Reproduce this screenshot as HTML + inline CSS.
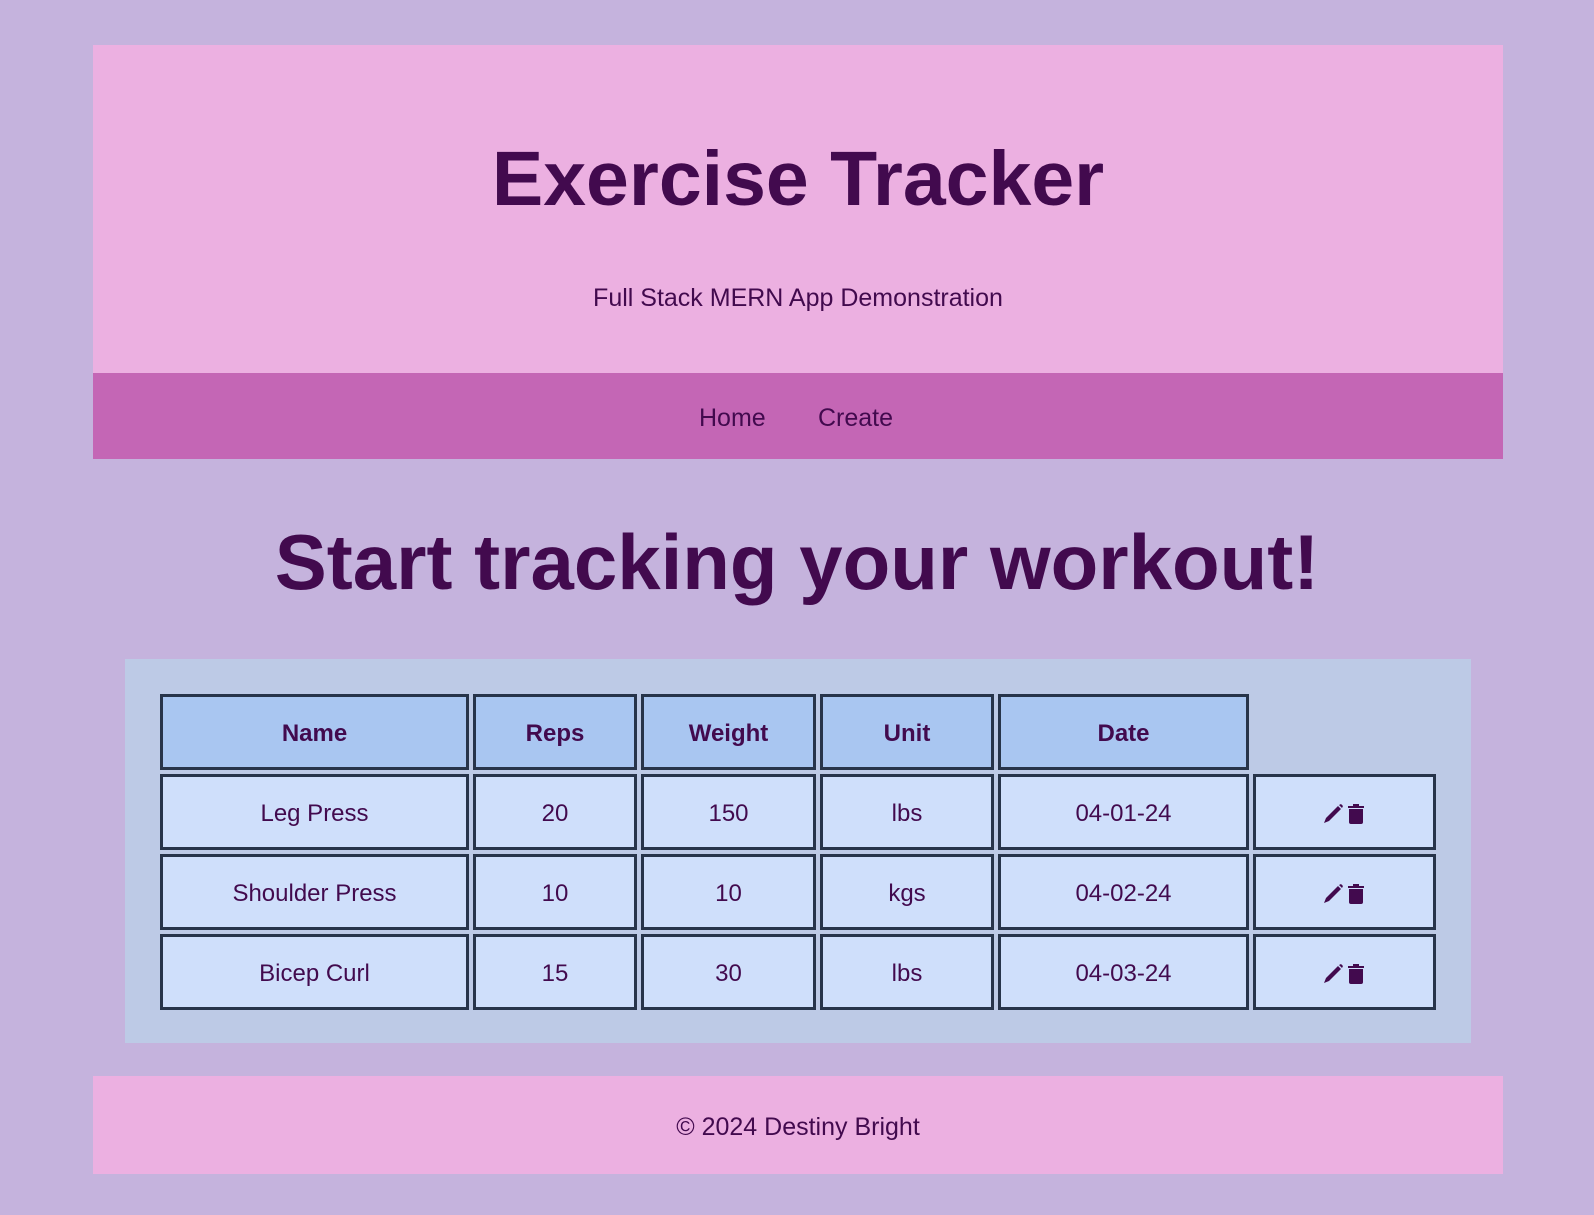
<!DOCTYPE html>
<html><head><meta charset="utf-8"><style>
*{box-sizing:border-box;margin:0;padding:0}
body{width:1594px;height:1215px;background:#c5b3dd;font-family:"Liberation Sans",sans-serif;color:#420a4e;position:relative;overflow:hidden}
header{position:absolute;left:93px;top:45px;width:1410px;height:328px;background:#ecb0e1;text-align:center}
header h1{position:absolute;left:0;right:0;top:134px;font-size:77px;line-height:0;font-weight:bold}
header p{position:absolute;left:0;right:0;top:253px;font-size:25px;line-height:0}
nav{position:absolute;left:93px;top:373px;width:1410px;height:86px;background:#c466b5;font-size:25px}
nav a{position:absolute;top:45px;line-height:0;color:#420a4e;text-decoration:none}
h2{position:absolute;left:0;right:0;top:562px;line-height:0;text-align:center;font-size:78px;font-weight:bold}
.box{position:absolute;left:125px;top:659px;width:1346px;height:384px;background:#bdcae6}
table{position:absolute;left:31px;top:31px;border-spacing:4px;border-collapse:separate}
td,th{border:3px solid #27344a;height:76px;text-align:center;font-size:24px;padding:4px 0 0}
th{background:#a9c6f1;font-weight:bold}
td{background:#cfdffb}
th.e{background:none;border:none}
footer{position:absolute;left:93px;top:1076px;width:1410px;height:98px;background:#ecb0e1;text-align:center;font-size:25px;line-height:102px}
svg{vertical-align:middle}
</style></head><body>
<header><h1>Exercise Tracker</h1><p>Full Stack MERN App Demonstration</p></header>
<nav><a style="left:606px">Home</a><a style="left:725px">Create</a></nav>
<h2>Start tracking your workout!</h2>
<div class="box"><table>
<tr><th style="width:309px">Name</th><th style="width:164px">Reps</th><th style="width:175px">Weight</th><th style="width:174px">Unit</th><th style="width:251px">Date</th><th class="e" style="width:183px"></th></tr>
<tr><td>Leg Press</td><td>20</td><td>150</td><td>lbs</td><td>04-01-24</td><td><svg width="50" height="24" viewBox="0 0 50 24"><path d="M4 20l2-5 12-12 3 3-12 12z M19 2l2-1 2 2-1 2z" fill="#420a4e"/><rect x="28" y="3" width="16" height="2" fill="#420a4e"/><rect x="33" y="1" width="6" height="3" fill="#420a4e"/><path d="M29 6h14v13a2 2 0 0 1-2 2h-10a2 2 0 0 1-2-2z" fill="#420a4e"/></svg></td></tr>
<tr><td>Shoulder Press</td><td>10</td><td>10</td><td>kgs</td><td>04-02-24</td><td><svg width="50" height="24" viewBox="0 0 50 24"><path d="M4 20l2-5 12-12 3 3-12 12z M19 2l2-1 2 2-1 2z" fill="#420a4e"/><rect x="28" y="3" width="16" height="2" fill="#420a4e"/><rect x="33" y="1" width="6" height="3" fill="#420a4e"/><path d="M29 6h14v13a2 2 0 0 1-2 2h-10a2 2 0 0 1-2-2z" fill="#420a4e"/></svg></td></tr>
<tr><td>Bicep Curl</td><td>15</td><td>30</td><td>lbs</td><td>04-03-24</td><td><svg width="50" height="24" viewBox="0 0 50 24"><path d="M4 20l2-5 12-12 3 3-12 12z M19 2l2-1 2 2-1 2z" fill="#420a4e"/><rect x="28" y="3" width="16" height="2" fill="#420a4e"/><rect x="33" y="1" width="6" height="3" fill="#420a4e"/><path d="M29 6h14v13a2 2 0 0 1-2 2h-10a2 2 0 0 1-2-2z" fill="#420a4e"/></svg></td></tr>
</table></div>
<footer>© 2024 Destiny Bright</footer>
</body></html>
